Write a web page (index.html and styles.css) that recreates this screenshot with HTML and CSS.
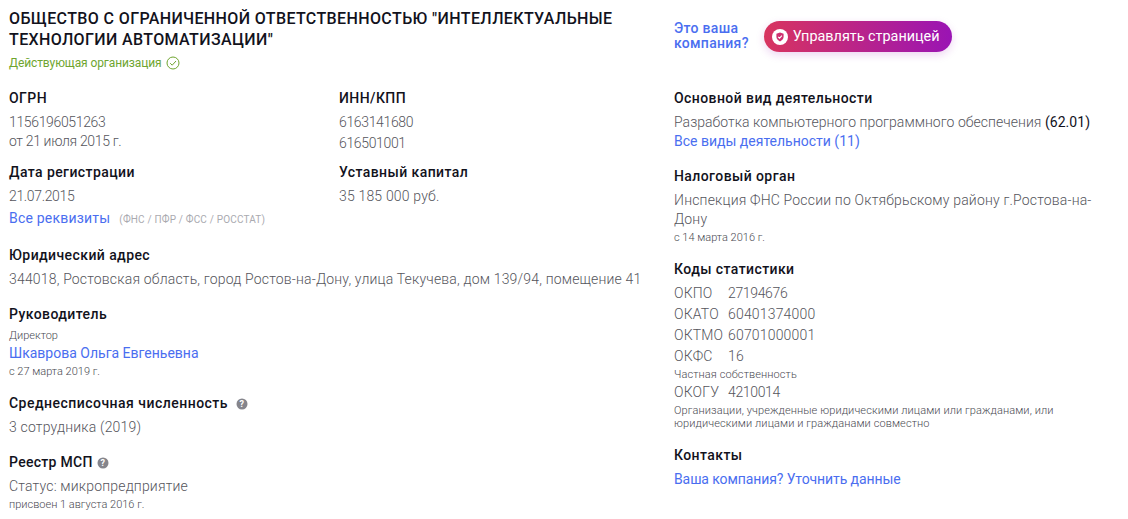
FILE: index.html
```html
<!DOCTYPE html>
<html lang="ru">
<head>
<meta charset="utf-8">
<title>Организация</title>
<link rel="stylesheet" href="styles.css">
</head>
<body>
<main class="page">
  <section class="left">
    <h1 class="title">ОБЩЕСТВО С ОГРАНИЧЕННОЙ ОТВЕТСТВЕННОСТЬЮ "ИНТЕЛЛЕКТУАЛЬНЫЕ ТЕХНОЛОГИИ АВТОМАТИЗАЦИИ"</h1>
    <div class="status">Действующая организация
      <svg class="status-icon" viewBox="0 0 14 14" width="14" height="14"><circle cx="7" cy="7" r="6" fill="none" stroke="#6fa52f" stroke-width="1"/><path d="M4.2 7.2l2 2 3.8-4.2" fill="none" stroke="#6fa52f" stroke-width="1"/></svg>
    </div>
    <div class="reqs">
      <div class="block b-ogrn">
        <div class="label">ОГРН</div>
        <div class="line num">1156196051263</div>
        <div class="line num pull">от 21 июля 2015 г.</div>
      </div>
      <div class="block b-ogrn">
        <div class="label">ИНН/КПП</div>
        <div class="line num">6163141680</div>
        <div class="line num">616501001</div>
      </div>
      <div class="block b-date">
        <div class="label">Дата регистрации</div>
        <div class="line num">21.07.2015</div>
        <div class="line line-link"><a class="link link-wide" href="#">Все реквизиты</a><span class="sources">(ФНС / ПФР / ФСС / РОССТАТ)</span></div>
      </div>
      <div class="block b-date">
        <div class="label">Уставный капитал</div>
        <div class="line">35 185 000 руб.</div>
      </div>
    </div>
    <div class="block b-addr">
      <div class="label">Юридический адрес</div>
      <div class="line">344018, Ростовская область, город Ростов-на-Дону, улица Текучева, дом 139/94, помещение 41</div>
    </div>
    <div class="block b-head">
      <div class="label">Руководитель</div>
      <div class="small small-first">Директор</div>
      <div class="line line-after-small"><a class="link" href="#">Шкаврова Ольга Евгеньевна</a></div>
      <div class="small">с 27 марта 2019 г.</div>
    </div>
    <div class="block b-staff">
      <div class="label label-staff">Среднесписочная численность
        <svg class="help" viewBox="0 0 12 12" width="12" height="12"><circle cx="6" cy="6" r="5.5" fill="#85858c"/><text x="6" y="9" text-anchor="middle" class="help-mark">?</text></svg>
      </div>
      <div class="line">3 сотрудника (2019)</div>
    </div>
    <div class="block b-msp">
      <div class="label label-msp">Реестр МСП
        <svg class="help" viewBox="0 0 12 12" width="12" height="12"><circle cx="6" cy="6" r="5.5" fill="#85858c"/><text x="6" y="9" text-anchor="middle" class="help-mark">?</text></svg>
      </div>
      <div class="line">Статус: микропредприятие</div>
      <div class="small">присвоен 1 августа 2016 г.</div>
    </div>
  </section>
  <section class="right">
    <div class="claim">
      <a class="claim-text" href="#">Это ваша<br>компания?</a>
      <a class="manage" href="#">
        <svg class="manage-icon" viewBox="0 0 16 16" width="16" height="16"><circle cx="8" cy="8" r="8" fill="#fff"/><path d="M8 3.6l3.6 1.2v3c0 2.2-1.6 3.7-3.6 4.6-2-.9-3.6-2.4-3.6-4.6v-3z" fill="#cf2f6e"/><path d="M6.2 7.8l1.4 1.4 2.3-2.5" fill="none" stroke="#fff" stroke-width="1.1"/></svg>
        Управлять страницей
      </a>
    </div>
    <div class="block r-okved">
      <div class="label">Основной вид деятельности</div>
      <div class="line tight">Разработка компьютерного программного обеспечения <span class="code">(62.01)</span></div>
      <div class="line pull"><a class="link" href="#">Все виды деятельности (11)</a></div>
    </div>
    <div class="block r-tax">
      <div class="label">Налоговый орган</div>
      <div class="line wrap">Инспекция ФНС России по Октябрьскому району г.Ростова-на-Дону</div>
      <div class="small small-mid">с 14 марта 2016 г.</div>
    </div>
    <div class="block r-stat">
      <div class="label">Коды статистики</div>
      <div class="line"><span class="key">ОКПО</span><span class="num">27194676</span></div>
      <div class="line"><span class="key">ОКАТО</span>60401374000</div>
      <div class="line"><span class="key">ОКТМО</span>60701000001</div>
      <div class="line"><span class="key">ОКФС</span>16</div>
      <div class="small small-wide">Частная собственность</div>
      <div class="line line-after-small"><span class="key">ОКОГУ</span><span class="num">4210014</span></div>
      <div class="small small-wide wrap-small">Организации, учрежденные юридическими лицами или гражданами, или юридическими лицами и гражданами совместно</div>
    </div>
    <div class="block r-contacts">
      <div class="label">Контакты</div>
      <div class="line"><a class="link link-narrow" href="#">Ваша компания? Уточнить данные</a></div>
    </div>
  </section>
</main>
</body>
</html>
```

FILE: styles.css
```css
* { box-sizing: border-box; }
html, body { margin: 0; height: 519px; overflow: hidden; background: #fff; }
body { font-family: Roboto, "Liberation Sans", sans-serif; color: #55555c; font-size: 14px; font-weight: 300; }
a { text-decoration: none; }
.page { display: flex; padding: 8px 0 0 9px; }
.left { width: 665px; flex: none; }
.right { width: 440px; flex: none; }
.title { margin: 0; width: 640px; font-size: 16px; line-height: 21px; font-weight: 500; color: #12121c; letter-spacing: .38px; }
.status { margin-top: 4px; font-size: 12px; line-height: 18px; color: #6fa52f; font-weight: 400; letter-spacing: -.1px; display: flex; align-items: center; gap: 4px; }
.reqs { display: grid; grid-template-columns: 330px 330px; }
.block { display: block; }
.b-ogrn { margin-top: 16px; }
.b-date { margin-top: 8px; }
.b-addr { margin-top: 15px; }
.b-head { margin-top: 14px; }
.b-staff { margin-top: 15px; }
.b-msp { margin-top: 14px; }
.label { font-size: 14px; line-height: 21px; font-weight: 500; color: #12121c; letter-spacing: .42px; display: flex; align-items: center; gap: 6px; }
.label-msp { letter-spacing: .3px; gap: 4px; }
.label-staff { gap: 8px; letter-spacing: .48px; }
.line { font-size: 14px; line-height: 21px; margin-top: 3px; color: #55555c; letter-spacing: .18px; }
.line + .line { margin-top: 0; }
.line + .line.pull { margin-top: -2px; }
.line + .line.line-link { margin-top: 1px; }
.num { letter-spacing: -.35px; }
.tight { letter-spacing: .04px; }
.line.line-after-small { margin-top: 1px; }
.link { color: #4a6ef0; font-weight: 400; letter-spacing: 0; }
.link-wide { letter-spacing: .2px; }
.link-narrow { letter-spacing: -.1px; }
.sources { font-size: 10px; font-weight: 400; margin-left: 9px; color: #aaaab0; }
.small { font-size: 11px; line-height: 13px; margin-top: 1px; color: #4a4a52; font-weight: 300; letter-spacing: 0; }
.small-first { margin-top: 4px; }
.small-mid { margin-top: 2px; }
.small-wide { letter-spacing: .1px; }
.help-mark { font-size: 9px; font-weight: 700; fill: #fff; }
.claim { display: flex; align-items: center; gap: 15px; height: 39px; margin-top: 9px; }
.claim-text { font-size: 14px; line-height: 15px; margin-bottom: 2px; color: #4a6ef0; font-weight: 500; letter-spacing: .3px; }
.manage { display: flex; align-items: center; gap: 5px; height: 31px; padding: 0 12px 0 8px; border-radius: 16px; color: #fff; font-size: 14.4px; font-weight: 400; background: linear-gradient(90deg, #d8345f, #9a14b4); box-shadow: 0 3px 8px rgba(154, 20, 180, .18); }
.r-okved { margin-top: 32px; }
.r-tax { margin-top: 14px; }
.r-stat { margin-top: 15px; }
.r-contacts { margin-top: 15px; }
.wrap { width: 430px; line-height: 19px; margin-top: 4px; }
.key { display: inline-block; width: 54px; }
.code { color: #12121c; font-weight: 400; }
.wrap-small { width: 400px; }
```
